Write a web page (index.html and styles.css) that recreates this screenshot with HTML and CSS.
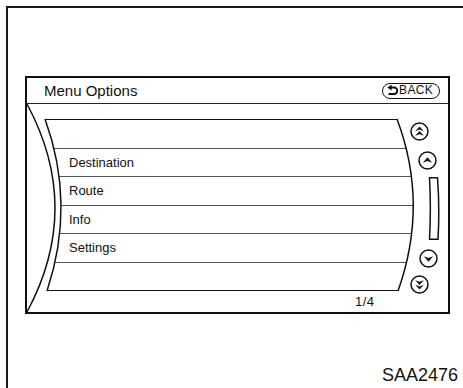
FILE: index.html
```html
<!DOCTYPE html>
<html>
  <head>
    <title>Menu Options</title>
    <link rel="stylesheet" href="styles.css">
  </head>
  <body>
    <div class="sheet">
      <div class="screen">
        <div class="screen_head">
          <span class="screen_title">Menu Options</span>
          <span class="back_btn">
            <svg class="back_icon" width="11" height="11" viewBox="0 0 11 11">
              <path d="M4 2.5 H7 A3.2 3.2 0 0 1 7 9 H1.5" fill="none" stroke="#111" stroke-width="2"/>
              <path d="M0.3 2.5 L4.6 -0.4 L4.6 5.4 Z" fill="#111"/>
            </svg>
            <span class="back_text">BACK</span>
          </span>
        </div>
        <div class="screen_body">
          <svg class="bezel" width="421" height="208" viewBox="0 0 421 208">
            <path d="M0 0 Q56 104 0 208" />
            <path d="M18 15 Q49 100 20 187" />
            <path d="M370 15 Q402 100 371 187" />
          </svg>
          <div class="list_col">
            <ul class="menu_list">
              <li></li>
              <li>Destination</li>
              <li>Route</li>
              <li>Info</li>
              <li>Settings</li>
              <li></li>
            </ul>
            <div class="page_num">1/4</div>
          </div>
          <div class="scroll_col">
            <svg class="scroll_btn at_top" width="19" height="19" viewBox="0 0 19 19">
              <circle cx="9.5" cy="9.5" r="8.5" />
              <path class="arrow" d="M5.2 9.2 L9.5 4.4 L13.8 9.2 L9.5 7.6 Z" />
              <path class="arrow" d="M5.2 13.8 L9.5 9 L13.8 13.8 L9.5 12.2 Z" />
            </svg>
            <svg class="scroll_btn at_up" width="19" height="19" viewBox="0 0 19 19">
              <circle cx="9.5" cy="9.5" r="8.5" />
              <path class="arrow" d="M4.8 11.8 L9.5 6.3 L14.2 11.8 L9.5 10 Z" />
            </svg>
            <svg class="scroll_bar" width="12" height="63" viewBox="0 0 12 63">
              <path d="M1.5 0.75 L9.5 0.75 Q11.8 31 10 62.25 L1.5 62.25 Q3.2 31 1.5 0.75 Z" />
            </svg>
            <svg class="scroll_btn at_down" width="19" height="19" viewBox="0 0 19 19">
              <circle cx="9.5" cy="9.5" r="8.5" />
              <path class="arrow" d="M4.8 7.2 L9.5 12.7 L14.2 7.2 L9.5 9 Z" />
            </svg>
            <svg class="scroll_btn at_bottom" width="19" height="19" viewBox="0 0 19 19">
              <circle cx="9.5" cy="9.5" r="8.5" />
              <path class="arrow" d="M5.2 5.2 L9.5 10 L13.8 5.2 L9.5 6.8 Z" />
              <path class="arrow" d="M5.2 9.8 L9.5 14.6 L13.8 9.8 L9.5 11.4 Z" />
            </svg>
          </div>
        </div>
      </div>
      <div class="fig_code">SAA2476</div>
    </div>
  </body>
</html>
```

FILE: styles.css
```css
html, body { margin: 0; overflow: hidden; }
body { font-family: "Liberation Sans", Arial, sans-serif; color: #111; background: #fff; }

.sheet { box-sizing: border-box; margin: 6px 0 0 6px; height: 382px; border-left: 2px solid #1a1a1a; border-top: 2px solid #1a1a1a; }

.screen { box-sizing: border-box; width: 425px; height: 238px; margin: 68px 0 0 17px; border: 2px solid #111; }

.screen_head { height: 25px; border-bottom: 1px solid #222; display: flex; justify-content: space-between; }
.screen_title { padding: 1px 0 0 17px; font-size: 15px; line-height: 24px; }
.back_btn { box-sizing: border-box; align-self: center; display: flex; align-items: center; width: 58px; height: 16px; margin-right: 8px; padding-left: 4px; border: 1.5px solid #111; border-radius: 8px; }
.back_icon { display: block; flex: none; }
.back_text { margin-left: 1px; font-size: 12px; line-height: 13px; letter-spacing: 0.4px; }

.screen_body { position: relative; display: flex; height: 208px; }
.bezel { position: absolute; left: 0; top: 0; z-index: 2; pointer-events: none; overflow: visible; }
.bezel path { fill: none; stroke: #111; stroke-width: 1.5; }

.list_col { flex: none; width: 368px; margin: 15px 0 0 18px; }
.menu_list { margin: 0; padding: 0; list-style: none; border-top: 1px solid #111; border-bottom: 1px solid #111; clip-path: path('M0 0 L352 0 Q384 86 353 172 L2 172 Q31 86 0 0 Z'); }
.menu_list > li { height: 27.5px; padding-left: 24px; font-size: 13px; line-height: 27.5px; }
.menu_list > li + li { border-top: 1px solid #555; }
.page_num { margin: 3px 0 0 310px; font-size: 13px; line-height: 16px; letter-spacing: 0.5px; }

.scroll_col { flex: none; display: flex; flex-direction: column; align-items: flex-start; width: 39px; margin-left: -4px; padding-top: 18px; }
.scroll_btn, .scroll_bar { display: block; }
.scroll_btn circle { fill: #fff; stroke: #111; stroke-width: 1.5; }
.scroll_btn .arrow { fill: #111; }
.scroll_bar path { fill: #fff; stroke: #111; stroke-width: 1.5; }
.at_top { margin-left: 1px; }
.at_up { margin: 9.5px 0 0 8.5px; }
.scroll_bar { margin: 7.5px 0 0 19px; }
.at_down { margin: 8.5px 0 0 9.5px; }
.at_bottom { margin: 7px 0 0 0.5px; }

.fig_code { margin-top: 51px; padding-right: 5px; text-align: right; font-size: 18px; line-height: 20px; }
```
